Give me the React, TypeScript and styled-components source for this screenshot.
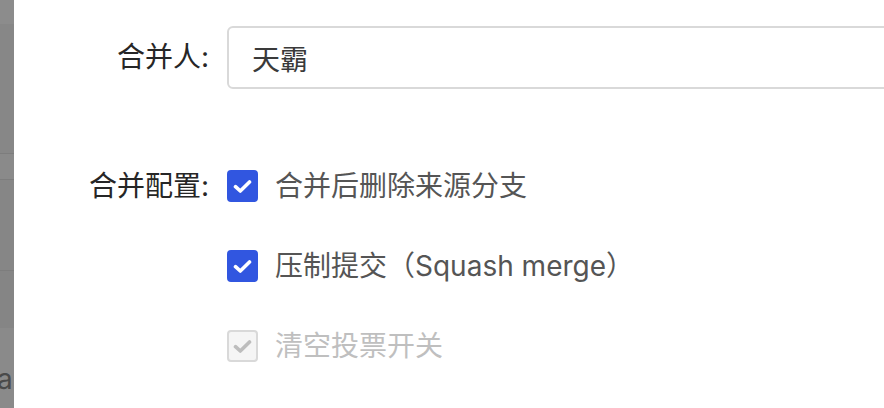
import { FunctionComponent } from "react";
import styled, { createGlobalStyle } from "styled-components";

const GlobalStyle = createGlobalStyle`
    html,
    body {
        margin: 0;
        padding: 0;
        background: #ffffff;
    }

    body {
        font-family: "Inter", "Noto Sans CJK SC", sans-serif;
    }
`;

interface BackdropBand {
    height: number;
    tone: string;
    line?: boolean;
}

const BACKDROP_BANDS: BackdropBand[] = [
    { height: 24, tone: "#8c8c8c" },
    { height: 129, tone: "#878787", line: true },
    { height: 25, tone: "#8a8a8a", line: true },
    { height: 90, tone: "#868686", line: true },
    { height: 57, tone: "#858585" },
];

const OPTIONS = [
    { label: "合并后删除来源分支", checked: true, disabled: false },
    { label: "压制提交（Squash merge）", checked: true, disabled: false },
    { label: "清空投票开关", checked: true, disabled: true },
];

const Page = styled.div`
    display: flex;
    width: 884px;
    height: 408px;
    overflow: hidden;
`;

const Backdrop = styled.div`
    display: flex;
    flex-direction: column;
    width: 14px;
    flex-shrink: 0;
    overflow: hidden;
    background: #8a8a8a;
`;

const Band = styled.div<{ $tone: string; $line?: boolean }>`
    flex-shrink: 0;
    background: ${({ $tone }) => $tone};
    border-bottom: ${({ $line }) => ($line ? "1px solid #7d7d7d" : "none")};
`;

const BackdropText = styled.div`
    margin: 34px 0 0 -3px;
    font-family: "Inter", sans-serif;
    font-size: 28px;
    line-height: 34px;
    color: #4a4a4a;
    white-space: nowrap;
`;

const Modal = styled.div`
    flex: 1;
    background: #ffffff;
    overflow: hidden;
    padding-top: 26px;
`;

const Form = styled.div`
    display: grid;
    grid-template-columns: 195px 680px;
    column-gap: 18px;
    align-items: start;
`;

const Label = styled.div<{ $top: number }>`
    margin-top: ${({ $top }) => $top}px;
    text-align: right;
    font-size: 28px;
    line-height: 40px;
    color: #262626;
    white-space: nowrap;
`;

const Input = styled.div`
    box-sizing: border-box;
    height: 63px;
    display: flex;
    align-items: center;
    padding: 0 23px;
    border: 2px solid #d9d9d9;
    border-radius: 6px;
    font-size: 28px;
    color: #3a3a3a;
`;

const OptionList = styled.div`
    display: flex;
    flex-direction: column;
    margin-top: 57px;
`;

const OptionRow = styled.label`
    display: flex;
    align-items: center;
    gap: 17px;
    height: 80px;
`;

const Box = styled.span<{ $checked: boolean; $disabled: boolean }>`
    box-sizing: border-box;
    display: flex;
    align-items: center;
    justify-content: center;
    width: 31px;
    height: 32px;
    border-radius: 4px;
    background: ${({ $checked, $disabled }) =>
        $disabled ? "#f5f5f5" : $checked ? "#3156e0" : "#ffffff"};
    border: 2px solid
        ${({ $checked, $disabled }) =>
            $disabled ? "#d9d9d9" : $checked ? "#3156e0" : "#d9d9d9"};
`;

const OptionText = styled.span<{ $disabled: boolean }>`
    font-size: 28px;
    line-height: 40px;
    color: ${({ $disabled }) => ($disabled ? "#bfbfbf" : "#555555")};
    white-space: nowrap;
`;

const CheckMark: FunctionComponent<{ color: string }> = ({ color }) => (
    <svg width="19" height="15" viewBox="0 0 19 15" fill="none">
        <path
            d="M2.5 7.6 L7.3 12 L16.5 3"
            stroke={color}
            strokeWidth="3.6"
            strokeLinecap="round"
            strokeLinejoin="round"
        />
    </svg>
);

const App: FunctionComponent = () => (
    <Page>
        <GlobalStyle />
        <Backdrop>
            {BACKDROP_BANDS.map(({ height, tone, line }, index) => (
                <Band
                    key={index}
                    $tone={tone}
                    $line={line}
                    style={{ height }}
                />
            ))}
            <BackdropText>ar</BackdropText>
        </Backdrop>
        <Modal>
            <Form>
                <Label $top={11}>合并人:</Label>
                <Input>天霸</Input>
                <Label $top={77}>合并配置:</Label>
                <OptionList>
                    {OPTIONS.map(({ label, checked, disabled }) => (
                        <OptionRow key={label}>
                            <Box $checked={checked} $disabled={disabled}>
                                {checked && (
                                    <CheckMark
                                        color={disabled ? "#bdbdbd" : "#ffffff"}
                                    />
                                )}
                            </Box>
                            <OptionText $disabled={disabled}>{label}</OptionText>
                        </OptionRow>
                    ))}
                </OptionList>
            </Form>
        </Modal>
    </Page>
);

export default App;
